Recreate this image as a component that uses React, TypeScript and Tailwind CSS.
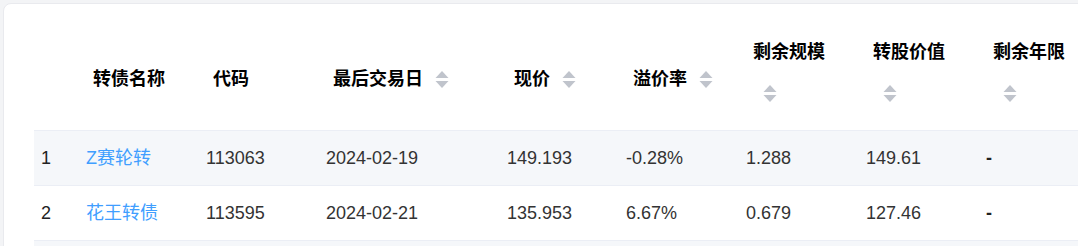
import React from 'react'

type Col = { label: string; width: number; sort: 'none' | 'inline' | 'wrap' }

const columns: Col[] = [
  { label: '', width: 45, sort: 'none' },
  { label: '转债名称', width: 120, sort: 'none' },
  { label: '代码', width: 120, sort: 'none' },
  { label: '最后交易日', width: 181, sort: 'inline' },
  { label: '现价', width: 119, sort: 'inline' },
  { label: '溢价率', width: 120, sort: 'inline' },
  { label: '剩余规模', width: 120, sort: 'wrap' },
  { label: '转股价值', width: 120, sort: 'wrap' },
  { label: '剩余年限', width: 160, sort: 'wrap' },
]

const rows = [
  ['1', 'Z赛轮转', '113063', '2024-02-19', '149.193', '-0.28%', '1.288', '149.61', '-'],
  ['2', '花王转债', '113595', '2024-02-21', '135.953', '6.67%', '0.679', '127.46', '-'],
  ['', '', '', '', '', '', '', '', ''],
]

function SortIcon() {
  return (
    <svg width="14" height="19" viewBox="0 0 14 19" className="shrink-0">
      <polygon points="7,1 13.5,8 0.5,8" fill="#c0c4cc" />
      <polygon points="0.5,11 13.5,11 7,18" fill="#c0c4cc" />
    </svg>
  )
}

export default function App() {
  return (
    <div
      className="w-[1078px] h-[246px] overflow-hidden bg-[#f3f4f6] pt-[3px] pl-[3px]"
      style={{ fontFamily: '"Liberation Sans", "Noto Sans CJK SC", sans-serif' }}
    >
      <div className="w-[1200px] h-[300px] bg-white rounded-lg border border-[#e9eaee] pl-[30px]">
        {/* Header */}
        <div className="flex h-[127px] border-b border-[#ebeef5]">
          {columns.map((c, i) => (
            <div key={i} style={{ width: c.width }} className="shrink-0 pl-[14px] text-[18px] font-bold text-black">
              {c.sort === 'wrap' ? (
                <div className="pt-[36px] flex flex-col items-start">
                  <span className="leading-[24px]">{c.label}</span>
                  <span className="mt-[20px] ml-[10px]">
                    <SortIcon />
                  </span>
                </div>
              ) : (
                <div className="pt-[63px] flex items-center gap-[12px] leading-[24px]">
                  <span>{c.label}</span>
                  {c.sort === 'inline' && <SortIcon />}
                </div>
              )}
            </div>
          ))}
        </div>

        {/* Body */}
        {rows.map((r, ri) => (
          <div
            key={ri}
            className={`flex h-[55px] items-center border-b border-[#ebeef5] ${ri % 2 === 0 ? 'bg-[#f5f7fa]' : 'bg-white'}`}
          >
            {r.map((v, ci) => (
              <div
                key={ci}
                style={{ width: columns[ci].width }}
                className={`shrink-0 pl-[7px] text-[18px] ${
                  ci === 1
                    ? 'text-[#409eff]'
                    : ci === 8
                      ? 'text-[#222] font-bold'
                      : ci === 0
                        ? 'text-[#222]'
                        : 'text-[#333]'
                }`}
              >
                {v}
              </div>
            ))}
          </div>
        ))}
      </div>
    </div>
  )
}
